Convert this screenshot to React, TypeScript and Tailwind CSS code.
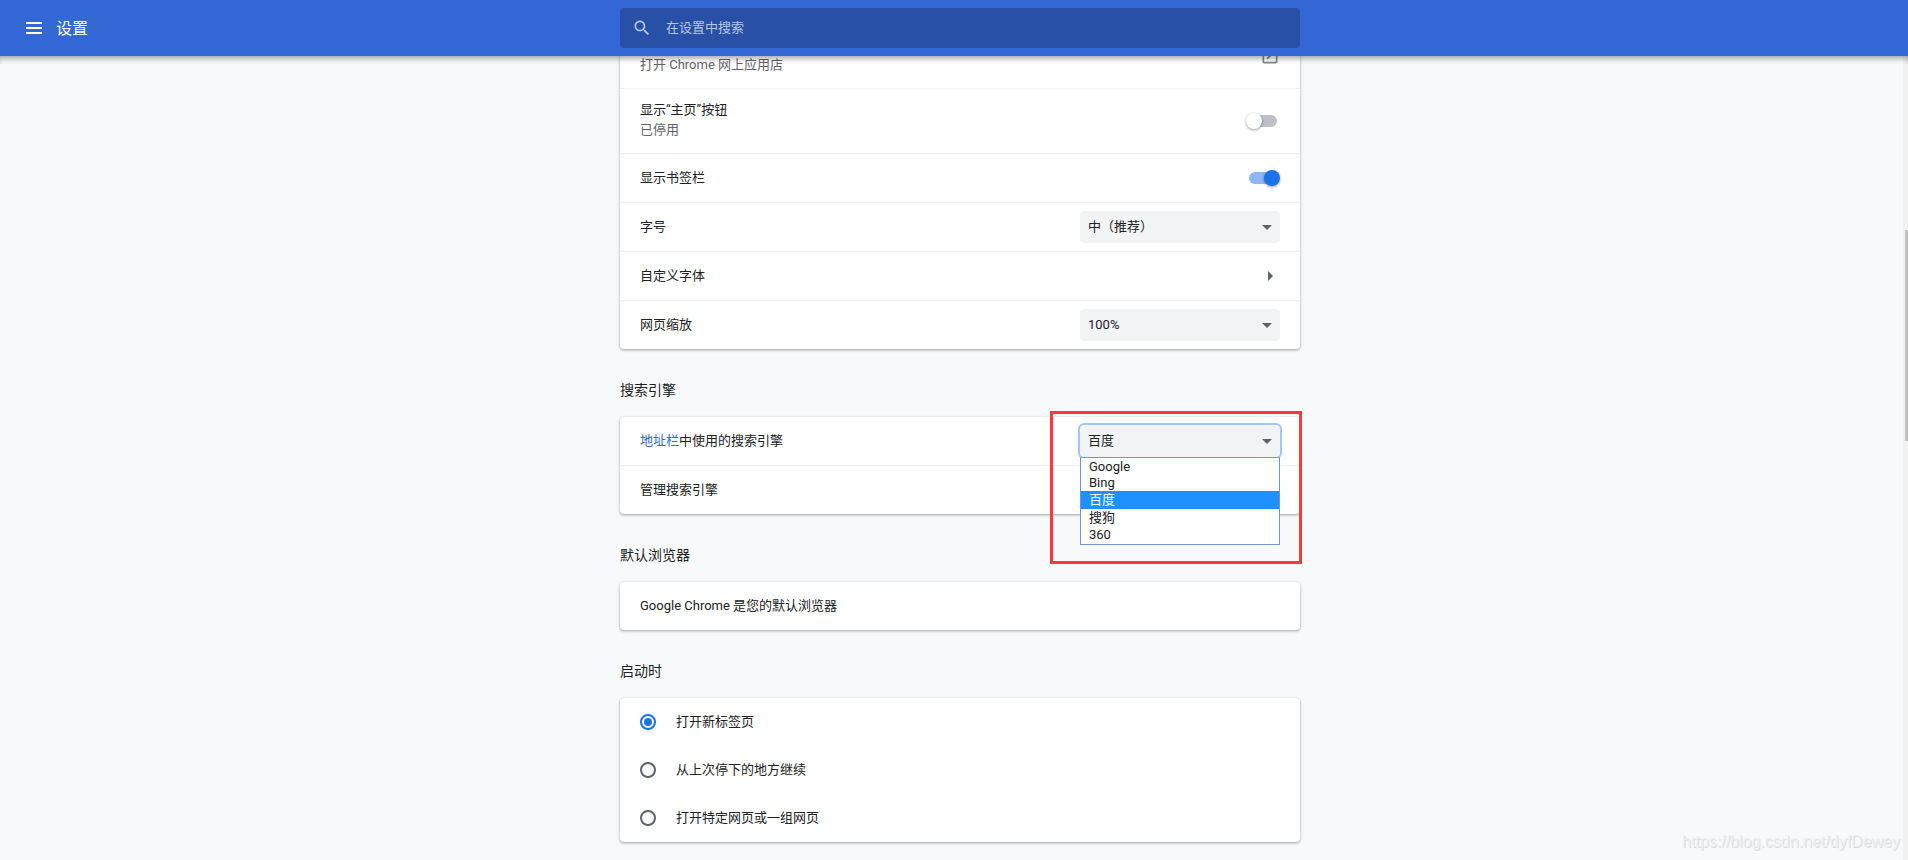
import { useState } from 'react';
import type { ReactNode } from 'react';
import clsx from 'clsx';

const engines = ['Google', 'Bing', '百度', '搜狗', '360'];

const startupOptions = ['打开新标签页', '从上次停下的地方继续', '打开特定网页或一组网页'];

const Card = ({ children, className }: { children: ReactNode; className?: string }) => (
  <div
    className={clsx(
      'rounded bg-white shadow-[0_1px_2px_rgba(60,64,67,0.3),0_1px_3px_1px_rgba(60,64,67,0.15)]',
      className
    )}
  >
    {children}
  </div>
);

const Section = ({ title, children }: { title: string; children: ReactNode }) => (
  <section>
    <h2 className="pt-8 pb-[18px] text-sm leading-[18px]">{title}</h2>
    {children}
  </section>
);

// every row below the first one of a card
const rowClass = 'flex h-[49px] w-full items-center justify-between border-t border-black/6 px-5';

const ArrowRight = () => (
  <span className="flex w-5 justify-center">
    <svg className="h-[10px] w-[5px] fill-[#5f6368]" viewBox="0 0 5 10" aria-hidden="true">
      <path d="M0 0l5 5-5 5z" />
    </svg>
  </span>
);

const OpenInNew = () => (
  <svg className="h-5 w-5 fill-[#80868b]" viewBox="0 0 24 24" aria-hidden="true">
    <path d="M19 19H5V5h7V3H5c-1.11 0-2 .9-2 2v14c0 1.1.89 2 2 2h14c1.1 0 2-.9 2-2v-7h-2v7zM14 3v2h3.59l-9.83 9.83 1.41 1.41L19 6.41V10h2V3h-7z" />
  </svg>
);

const Toggle = ({ id, defaultOn = false }: { id: string; defaultOn?: boolean }) => {
  const [on, setOn] = useState(defaultOn);

  return (
    <span className="relative flex h-4 w-[34px] items-center justify-center">
      <input
        id={id}
        type="checkbox"
        role="switch"
        checked={on}
        onChange={() => setOn(!on)}
        className="h-3 w-7 appearance-none rounded-full bg-[#bdc1c6] checked:bg-[#8cb8f7]"
      />
      <span
        className={clsx(
          'pointer-events-none absolute top-0 h-4 w-4 rounded-full shadow-[0_1px_3px_rgba(0,0,0,0.4)]',
          on ? 'right-0 bg-[#1a73e8]' : 'left-0 bg-white'
        )}
      />
    </span>
  );
};

type SelectProps = {
  id: string;
  options: string[];
  value: string;
  onChange?: (value: string) => void;
  focused?: boolean;
};

const Select = ({ id, options, value, onChange, focused }: SelectProps) => (
  <span className="relative flex w-[200px] items-center">
    <select
      id={id}
      defaultValue={value}
      onChange={(e) => onChange?.(e.target.value)}
      className={clsx(
        'h-8 w-full appearance-none rounded bg-[#f1f3f4] pr-8 pl-2 text-[13px] outline-none',
        focused && 'ring-2 ring-[#a3c7f9]'
      )}
    >
      {options.map((option) => (
        <option key={option}>{option}</option>
      ))}
    </select>
    <svg
      className="pointer-events-none absolute right-2 h-[5px] w-[10px] fill-[#5f6368]"
      viewBox="0 0 10 5"
      aria-hidden="true"
    >
      <path d="M0 0h10L5 5z" />
    </svg>
  </span>
);

const Header = () => (
  <header className="relative z-10 grid h-14 grid-cols-[1fr_minmax(0,680px)_1fr] items-center bg-[#3367d6] pl-3 text-white">
    <div className="flex items-center">
      <button type="button" aria-label="主菜单" className="px-3.5 py-2">
        <svg className="h-3 w-4 fill-white" viewBox="0 0 16 12" aria-hidden="true">
          <path d="M0 0h16v2H0zM0 5h16v2H0zM0 10h16v2H0z" />
        </svg>
      </button>
      <h1 className="pt-0.5 text-base">设置</h1>
    </div>

    {/* Search */}
    <label className="flex h-10 items-center gap-3.5 rounded-sm bg-[#2850a7] px-3">
      <svg className="h-5 w-5 shrink-0 fill-[#b7c5e4]" viewBox="0 0 24 24" aria-hidden="true">
        <path d="M15.5 14h-.79l-.28-.27C15.41 12.59 16 11.11 16 9.5 16 5.91 13.09 3 9.5 3S3 5.91 3 9.5 5.91 16 9.5 16c1.61 0 3.09-.59 4.23-1.57l.27.28v.79l5 4.99L20.49 19l-4.99-5zm-6 0C7.01 14 5 11.99 5 9.5S7.01 5 9.5 5 14 7.01 14 9.5 11.99 14 9.5 14z" />
      </svg>
      <input
        type="search"
        aria-label="在设置中搜索"
        placeholder="在设置中搜索"
        className="w-full bg-transparent text-[13px] outline-none placeholder:text-[#b7c5e4]"
      />
    </label>
  </header>
);

export default function App() {
  const [engine, setEngine] = useState('百度');

  return (
    <div className="flex min-h-screen flex-col bg-[#f8f9fb] font-[Roboto,'Noto_Sans_CJK_SC',sans-serif] text-[13px] leading-5 text-[#202124]">
      <Header />

      <div className="relative flex-1 overflow-hidden pb-4 pl-3">
        <div className="pointer-events-none absolute inset-x-0 top-0 z-10 h-2 shadow-[inset_0_5px_6px_-3px_rgba(0,0,0,0.4)]" />

        <main className="mx-auto max-w-[680px]">
          {/* Appearance */}
          <Card className="-mt-8">
            <a href="#" className="flex h-16 items-center justify-between px-5">
              <span className="pt-[18px] text-[#5f6368]">打开 Chrome 网上应用店</span>
              <OpenInNew />
            </a>
            <div className="flex h-[65px] items-center justify-between border-t border-black/6 px-5">
              <label htmlFor="home-button" className="pb-0.5">
                <span className="block">显示“主页”按钮</span>
                <span className="block text-[#5f6368]">已停用</span>
              </label>
              <Toggle id="home-button" />
            </div>
            <div className={rowClass}>
              <label htmlFor="bookmarks-bar">显示书签栏</label>
              <Toggle id="bookmarks-bar" defaultOn />
            </div>
            <div className={rowClass}>
              <label htmlFor="font-size">字号</label>
              <Select id="font-size" options={['小', '中（推荐）', '大']} value="中（推荐）" />
            </div>
            <button type="button" className={rowClass}>
              自定义字体
              <ArrowRight />
            </button>
            <div className={rowClass}>
              <label htmlFor="zoom-level">网页缩放</label>
              <Select id="zoom-level" options={['75%', '100%', '125%']} value="100%" />
            </div>
          </Card>

          <Section title="搜索引擎">
            <Card className="relative">
              <div className="relative flex h-12 items-center justify-between px-5">
                <label htmlFor="search-engine">
                  <a href="#" className="text-[#3367d6]">
                    地址栏
                  </a>
                  中使用的搜索引擎
                </label>
                <Select id="search-engine" options={engines} value={engine} onChange={setEngine} focused />
                <ul
                  role="listbox"
                  aria-label="搜索引擎"
                  className="absolute top-10 right-5 z-10 w-[200px] border border-[#7295d3] bg-white py-px"
                >
                  {engines.map((name) => (
                    <li
                      key={name}
                      role="option"
                      aria-selected={name === engine}
                      className={clsx(
                        'px-2',
                        /[a-z0-9]/i.test(name) ? 'h-4 leading-4' : 'h-[18px] leading-[18px]',
                        name === engine && 'bg-[#1e90ff] text-white'
                      )}
                    >
                      {name}
                    </li>
                  ))}
                </ul>
              </div>
              <button type="button" className={rowClass}>
                管理搜索引擎
                <ArrowRight />
              </button>
              {/* Highlight frame */}
              <div className="pointer-events-none absolute -top-1.5 -right-0.5 z-20 h-[153px] w-[252px] border-3 border-[#fc3838]" />
            </Card>
          </Section>

          <Section title="默认浏览器">
            <Card>
              <div className="flex h-12 items-center px-5">Google Chrome 是您的默认浏览器</div>
            </Card>
          </Section>

          <Section title="启动时">
            <Card>
              {startupOptions.map((option, i) => (
                <label key={option} className="flex h-12 items-center gap-5 px-5">
                  <input
                    type="radio"
                    name="startup"
                    defaultChecked={i === 0}
                    className="flex h-4 w-4 appearance-none items-center justify-center rounded-full border-2 border-[#5f6368] checked:border-[#1a73e8] checked:before:h-2 checked:before:w-2 checked:before:rounded-full checked:before:bg-[#1a73e8]"
                  />
                  {option}
                </label>
              ))}
            </Card>
          </Section>
        </main>

        {/* Scrollbar */}
        <div className="absolute inset-y-0 right-0 w-[5px] bg-[#f1f1f1] pl-0.5">
          <div className="mt-[174px] h-[211px] bg-[#c1c1c1]" />
        </div>

        <p className="absolute right-2 bottom-2 font-['Liberation_Sans',sans-serif] text-base leading-5 text-[#eeeff1] [text-shadow:1px_1px_0_#dcdddf]">
          https://blog.csdn.net/dyfDewey
        </p>
      </div>
    </div>
  );
}
